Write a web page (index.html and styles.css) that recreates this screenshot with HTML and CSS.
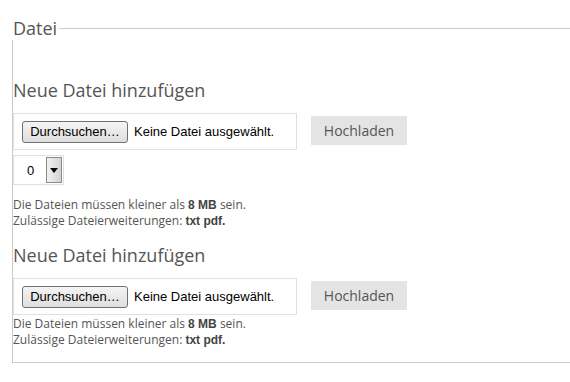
FILE: index.html
```html
<!DOCTYPE html>
<html lang="de">
<head>
<meta charset="utf-8">
<title>Datei</title>
<link rel="stylesheet" href="styles.css">
</head>
<body>
<fieldset class="files">
  <legend class="files-legend">Datei</legend>
  <div class="files-body">
    <section class="upload upload-first">
      <h2 class="upload-title">Neue Datei hinzufügen</h2>
      <div class="upload-row">
        <div class="file-box">
          <span class="file-btn">Durchsuchen…</span>
          <span class="file-name">Keine Datei ausgewählt.</span>
        </div>
        <span class="upload-btn">Hochladen</span>
      </div>
      <div class="select-box">
        <span class="select-value">0</span>
        <span class="select-arrow"><svg width="8" height="5" viewBox="0 0 8 5"><path d="M0 0h8L4 5z" fill="#000"/></svg></span>
      </div>
      <p class="upload-help">Die Dateien müssen kleiner als <b>8 MB</b> sein.<br>Zulässige Dateierweiterungen: <b>txt pdf.</b></p>
    </section>
    <section class="upload upload-second">
      <h2 class="upload-title">Neue Datei hinzufügen</h2>
      <div class="upload-row">
        <div class="file-box">
          <span class="file-btn">Durchsuchen…</span>
          <span class="file-name">Keine Datei ausgewählt.</span>
        </div>
        <span class="upload-btn">Hochladen</span>
      </div>
      <p class="upload-help help-tight">Die Dateien müssen kleiner als <b>8 MB</b> sein.<br>Zulässige Dateierweiterungen: <b>txt pdf.</b></p>
    </section>
  </div>
</fieldset>
</body>
</html>
```

FILE: styles.css
```css
html, body {
  margin: 0;
  padding: 0;
  background: #fff;
  overflow: hidden;
}
body {
  font-family: "Open Sans", "DejaVu Sans", sans-serif;
  color: #555;
}
.files {
  margin: 16px 0 0 12px;
  padding: 0;
  border: 1px solid #cbcbcb;
  border-left: 0;
  border-right: 0;
  min-width: 0;
}
.files-legend {
  padding: 0 2px 0 1px;
  margin: 0;
  font-size: 18px;
  line-height: 24px;
  color: #555;
}
.files-body {
  border-left: 1px solid #cbcbcb;
  padding: 38px 0 14px 0;
}
.upload-title {
  margin: 0;
  font-size: 18px;
  line-height: 24px;
  font-weight: normal;
  color: #555;
}
.upload-row {
  display: flex;
  align-items: center;
  margin-top: 11px;
}
.file-box {
  box-sizing: border-box;
  width: 284px;
  height: 37px;
  border: 1px solid #e0e0e0;
  display: flex;
  align-items: center;
  padding-left: 8px;
  font-family: "Liberation Sans", Arial, sans-serif;
  font-size: 13px;
  color: #000;
}
.file-btn {
  box-sizing: border-box;
  width: 106px;
  height: 22px;
  border: 1px solid #707070;
  border-radius: 3px;
  background: linear-gradient(#f4f4f4, #dedede);
  display: flex;
  align-items: center;
  justify-content: center;
  color: #000;
}
.file-name {
  margin-left: 6px;
}
.upload-btn {
  margin-left: 14px;
  width: 96px;
  height: 29px;
  background: #e4e4e4;
  display: flex;
  align-items: center;
  justify-content: center;
  font-size: 14px;
  color: #555;
  margin-top: -2px;
}
.select-box {
  box-sizing: border-box;
  width: 51px;
  height: 30px;
  margin-top: 5px;
  border: 1px solid #e0e0e0;
  display: flex;
  align-items: center;
  padding: 1px;
  font-family: "Liberation Sans", Arial, sans-serif;
  font-size: 13px;
  color: #000;
}
.select-value {
  flex: 1;
  padding-left: 12px;
}
.select-arrow {
  box-sizing: border-box;
  width: 16px;
  height: 26px;
  border: 1px solid #8a8a8a;
  background: linear-gradient(to right, #f2f2f2, #d2d2d2);
  display: flex;
  align-items: center;
  justify-content: center;
}
.upload-help {
  margin: 12px 0 0 0;
  font-size: 12px;
  line-height: 16px;
  color: #555;
}
.upload-help b {
  font-family: "Liberation Sans", Arial, sans-serif;
  color: #444;
}
.help-tight {
  margin-top: 1px;
}
.upload-second {
  margin-top: 14px;
}
```
